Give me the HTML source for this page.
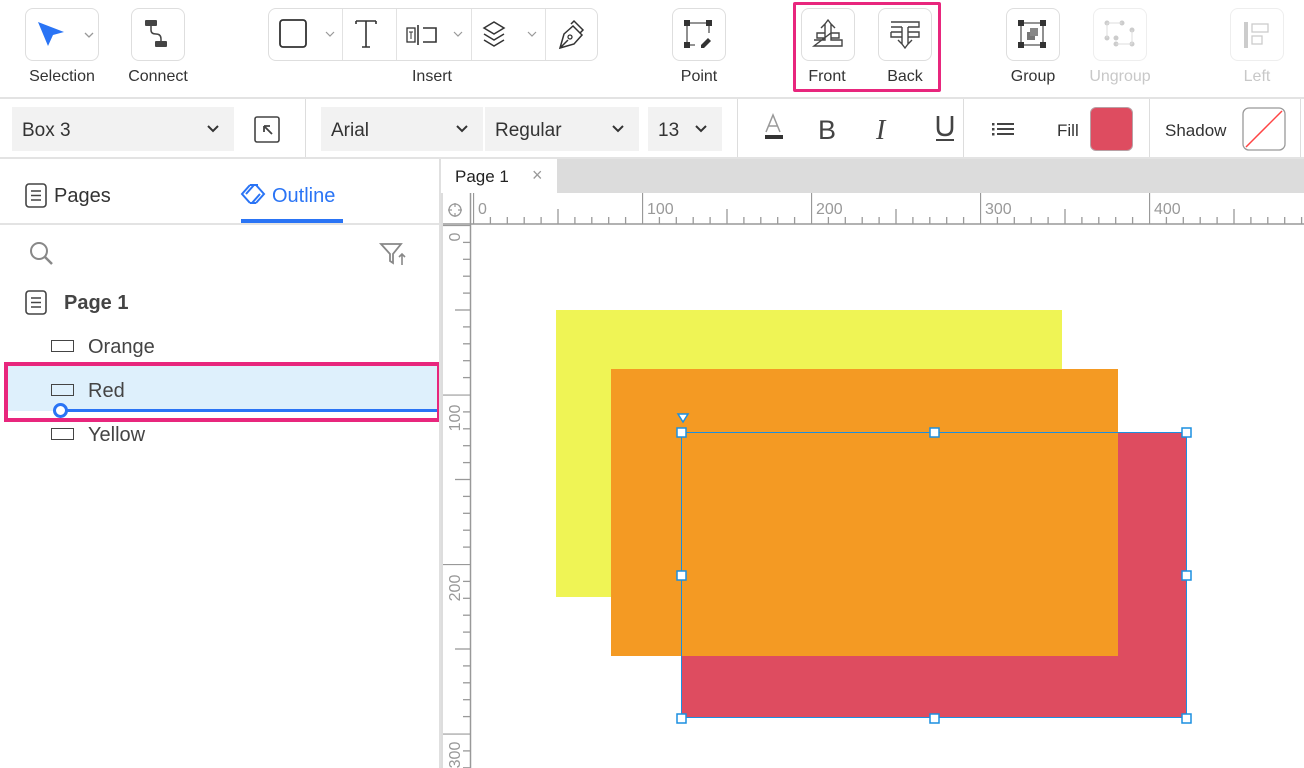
<!DOCTYPE html>
<html><head><meta charset="utf-8">
<style>
*{box-sizing:border-box;margin:0;padding:0}
body{width:1304px;height:768px;overflow:hidden;background:#fff;font-family:"Liberation Sans",sans-serif;color:#333;position:relative}
.a{position:absolute}
.btn{position:absolute;top:8px;height:53px;border:1.5px solid #dedede;border-radius:8px;background:#fff}
.lbl{position:absolute;top:68px;font-size:16px;color:#333;text-align:center;white-space:nowrap}
.dd{position:absolute;top:107px;height:44px;background:#f2f2f2;font-size:19px;color:#333;padding:13px 0 0 10px}
.chev{position:absolute;right:14px;top:15px}
.vd{position:absolute;width:1px;background:#ddd}
</style></head><body>

<!-- top toolbar -->
<div class="btn" style="left:25px;width:74px"></div>
<svg class="a" style="left:36px;top:20px" width="60" height="30"><path d="M2 2 L28 12 L17 15 L12 26 Z" fill="#2a74f5"/><path d="M49 13 l4 4 l4 -4" stroke="#999" stroke-width="1.3" fill="none"/></svg>
<div class="lbl" style="left:20px;width:84px">Selection</div>
<div class="btn" style="left:131px;width:54px"></div>
<svg class="a" style="left:143px;top:18px" width="30" height="30"><rect x="2" y="2" width="12" height="6" rx="1" fill="#444"/><rect x="12" y="23" width="12" height="6" rx="1" fill="#444"/><path d="M8 8 v4 q0 4 5 4 q5 0 5 5 v2" stroke="#444" stroke-width="1.5" fill="none"/></svg>
<div class="lbl" style="left:118px;width:80px">Connect</div>

<div class="btn" style="left:268px;width:330px"></div>
<div class="vd" style="left:342px;top:9px;height:51px;background:#e2e2e2"></div>
<div class="vd" style="left:396px;top:9px;height:51px;background:#e2e2e2"></div>
<div class="vd" style="left:471px;top:9px;height:51px;background:#e2e2e2"></div>
<div class="vd" style="left:545px;top:9px;height:51px;background:#e2e2e2"></div>
<svg class="a" style="left:268px;top:8px" width="330" height="53">
<rect x="12" y="12" width="26" height="27" rx="3" stroke="#333" stroke-width="1.8" fill="none"/>
<path d="M58 24 l4 4 l4 -4" stroke="#999" stroke-width="1.2" fill="none"/>
<path d="M88 13 h20 M98 13 v26 M94 39 h8 M88 13 v3 M108 13 v3" stroke="#333" stroke-width="1.6" fill="none"/>
<rect x="139" y="20" width="8" height="14" stroke="#333" stroke-width="1.3" fill="none"/><path d="M141 24 h4 M143 24 v7" stroke="#333" stroke-width="1"/>
<path d="M150 17 v20 M155 20 h13 v14 h-13" stroke="#333" stroke-width="1.6" fill="none"/>
<path d="M186 24 l4 4 l4 -4" stroke="#999" stroke-width="1.2" fill="none"/>
<path d="M216 20 l10 -6 l10 6 l-10 6 z M216 26 l10 6 l10 -6 M216 32 l10 6 l10 -6" stroke="#333" stroke-width="1.5" fill="none"/>
<path d="M260 24 l4 4 l4 -4" stroke="#999" stroke-width="1.2" fill="none"/>
<path d="M292 40 l4 -14 l9 -8 l9 9 l-8 9 z M292 40 l8 -8 M303 16 l3 -3 l9 9 l-3 3" stroke="#333" stroke-width="1.5" fill="none"/><circle cx="302" cy="29" r="2" stroke="#333" stroke-width="1.3" fill="none"/>
</svg>
<div class="lbl" style="left:392px;width:80px">Insert</div>

<div class="btn" style="left:672px;width:54px"></div>
<svg class="a" style="left:683px;top:19px" width="32" height="32"><path d="M4 4 h22 M4 4 v22 M4 26 h8 M26 4 v10" stroke="#555" stroke-width="1.3"/><rect x="1" y="1" width="6" height="6" fill="#333"/><rect x="23" y="1" width="6" height="6" fill="#333"/><rect x="1" y="23" width="6" height="6" fill="#333"/><path d="M18 26 l7 -7 l3 3 l-7 7 h-3z" fill="#333"/></svg>
<div class="lbl" style="left:662px;width:74px">Point</div>

<div class="btn" style="left:801px;width:54px"></div>
<svg class="a" style="left:811px;top:18px" width="34" height="34"><path d="M3 22 h11 v-2 h-8 v-5 h8 M20 15 h8 v5 h-8 v2 h11 v6 h-28 z M14 20 v-14 l-4 4 M20 20 v-14 l4 4 M14 6 l3 -4 l3 4" stroke="#444" stroke-width="1.4" fill="none"/></svg>
<div class="btn" style="left:878px;width:54px"></div>
<svg class="a" style="left:888px;top:18px" width="34" height="34"><path d="M3 4 h28 v5 h-11 M14 9 h-11 z M3 14 h11 M20 14 h11 v5 h-11 M14 19 h-11 v-5 M14 9 v17 l-4 -4 M20 9 v17 l4 -4 M14 26 l3 4 l3 -4" stroke="#444" stroke-width="1.4" fill="none"/></svg>
<div class="lbl" style="left:794px;width:66px">Front</div>
<div class="lbl" style="left:872px;width:66px">Back</div>
<div class="a" style="left:793px;top:2px;width:148px;height:90px;border:3px solid #e8267d;border-radius:2px"></div>

<div class="btn" style="left:1006px;width:54px"></div>
<svg class="a" style="left:1017px;top:19px" width="32" height="32"><path d="M4 4 h22 v22 h-22 z" stroke="#555" stroke-width="1.3" fill="none"/><rect x="1" y="1" width="6" height="6" fill="#333"/><rect x="23" y="1" width="6" height="6" fill="#333"/><rect x="1" y="23" width="6" height="6" fill="#333"/><rect x="23" y="23" width="6" height="6" fill="#333"/><rect x="10" y="13" width="8" height="8" fill="#777"/><rect x="13" y="9" width="8" height="8" fill="#888"/></svg>
<div class="lbl" style="left:996px;width:74px">Group</div>
<div class="btn" style="left:1093px;width:54px;border-color:#eee"></div>
<svg class="a" style="left:1104px;top:20px" width="32" height="30"><g fill="#ccc"><circle cx="3" cy="3" r="2.5"/><circle cx="18" cy="3" r="2.5"/><circle cx="3" cy="18" r="2.5"/><circle cx="12" cy="18" r="2.5"/><circle cx="28" cy="10" r="2.5"/><circle cx="12" cy="24" r="2.5"/><circle cx="28" cy="24" r="2.5"/></g><path d="M3 3 h15 M3 3 v15 M12 24 h16 M28 10 v14" stroke="#ddd"/></svg>
<div class="lbl" style="left:1080px;width:80px;color:#c8c8c8">Ungroup</div>
<div class="btn" style="left:1230px;width:54px;border-color:#eee"></div>
<svg class="a" style="left:1241px;top:20px" width="32" height="30"><rect x="3" y="2" width="4" height="26" fill="#ccc"/><rect x="11" y="4" width="16" height="8" stroke="#ccc" stroke-width="1.3" fill="none"/><rect x="11" y="16" width="10" height="8" stroke="#ccc" stroke-width="1.3" fill="none"/></svg>
<div class="lbl" style="left:1220px;width:74px;color:#c8c8c8">Left</div>

<div class="a" style="left:0;top:97px;width:1304px;height:2px;background:#e3e3e3"></div>

<!-- second toolbar -->
<div class="dd" style="left:12px;width:222px">Box 3<svg class="chev" width="14" height="14"><path d="M2 4 l5 5 l5 -5" stroke="#333" stroke-width="2" fill="none"/></svg></div>
<svg class="a" style="left:254px;top:116px" width="28" height="28"><rect x="1" y="1" width="24" height="25" rx="2" stroke="#444" stroke-width="1.6" fill="none"/><path d="M10 10 l8 8 M10 10 h6 M10 10 v6" stroke="#444" stroke-width="1.8" fill="none"/></svg>
<div class="vd" style="left:305px;top:99px;height:59px"></div>
<div class="dd" style="left:321px;width:162px">Arial<svg class="chev" width="14" height="14"><path d="M2 4 l5 5 l5 -5" stroke="#333" stroke-width="2" fill="none"/></svg></div>
<div class="dd" style="left:485px;width:154px">Regular<svg class="chev" width="14" height="14"><path d="M2 4 l5 5 l5 -5" stroke="#333" stroke-width="2" fill="none"/></svg></div>
<div class="dd" style="left:648px;width:74px">13<svg class="chev" width="14" height="14"><path d="M2 4 l5 5 l5 -5" stroke="#333" stroke-width="2" fill="none"/></svg></div>
<div class="vd" style="left:737px;top:99px;height:59px"></div>
<svg class="a" style="left:760px;top:112px" width="260" height="32">
<path d="M6 20 l7 -17 l7 17 M9 14 h8" stroke="#999" stroke-width="1.5" fill="none"/><rect x="5" y="23" width="18" height="4" fill="#333"/>
<text x="58" y="27" font-family="Liberation Sans" font-size="27" fill="#444">B</text>
<text x="116" y="27" font-family="Liberation Serif" font-style="italic" font-size="28" fill="#444">I</text>
<path d="M178 4 v12 q0 7 7 7 q7 0 7 -7 v-12" stroke="#444" stroke-width="2.6" fill="none"/><rect x="176" y="27" width="18" height="2" fill="#444"/>
<g fill="#444"><rect x="232" y="11" width="2.5" height="2.5"/><rect x="232" y="16" width="2.5" height="2.5"/><rect x="232" y="21" width="2.5" height="2.5"/><rect x="237" y="11" width="17" height="2"/><rect x="237" y="16" width="17" height="2"/><rect x="237" y="21" width="17" height="2"/></g>
</svg>
<div class="vd" style="left:963px;top:99px;height:59px"></div>
<div class="a" style="left:1057px;top:121px;font-size:17px">Fill</div>
<div class="a" style="left:1090px;top:107px;width:43px;height:44px;background:#de4c60;border:1px solid #b9a0a5;border-radius:6px"></div>
<div class="vd" style="left:1149px;top:99px;height:59px"></div>
<div class="a" style="left:1165px;top:121px;font-size:17px">Shadow</div>
<svg class="a" style="left:1242px;top:107px" width="44" height="44"><rect x="1" y="1" width="42" height="42" rx="6" stroke="#999" stroke-width="1.3" fill="#fff"/><path d="M4 40 L40 4" stroke="#f44" stroke-width="1.5"/></svg>
<div class="vd" style="left:1300px;top:99px;height:59px"></div>
<div class="a" style="left:0;top:157px;width:1304px;height:2px;background:#e3e3e3"></div>

<!-- left panel -->
<svg class="a" style="left:25px;top:183px" width="24" height="26"><rect x="1" y="1" width="20" height="23" rx="3" stroke="#444" stroke-width="1.6" fill="none"/><path d="M6 8 h10 M6 12.5 h10 M6 17 h10" stroke="#444" stroke-width="1.5"/></svg>
<div class="a" style="left:54px;top:185px;font-size:20px;color:#333">Pages</div>
<svg class="a" style="left:240px;top:183px" width="28" height="24"><path d="M10 2 l-8 9 l8 9 M16 2 l8 9 l-8 9 M10 2 l8 0 M10 20 h6 M6 11 l8 -9 M12 20 l8 -9" stroke="#2a74f5" stroke-width="2" fill="none"/></svg>
<div class="a" style="left:272px;top:185px;font-size:20px;color:#2a74f5">Outline</div>
<div class="a" style="left:241px;top:219px;width:102px;height:5px;background:#2a74f5"></div>
<div class="a" style="left:0;top:223px;width:440px;height:2px;background:#e3e3e3"></div>
<svg class="a" style="left:28px;top:240px" width="28" height="28"><circle cx="11" cy="11" r="8" stroke="#888" stroke-width="2" fill="none"/><path d="M17 17 l7 7" stroke="#888" stroke-width="2.5"/></svg>
<svg class="a" style="left:378px;top:240px" width="30" height="28"><path d="M3 4 h20 l-8 10 v9 l-3 -2 v-7 z" stroke="#888" stroke-width="1.8" fill="none"/><path d="M24 14 v11 M21 17 l3 -3 l3 3" stroke="#888" stroke-width="1.6" fill="none"/></svg>
<svg class="a" style="left:25px;top:290px" width="24" height="26"><rect x="1" y="1" width="20" height="23" rx="3" stroke="#444" stroke-width="1.6" fill="none"/><path d="M6 8 h10 M6 12.5 h10 M6 17 h10" stroke="#444" stroke-width="1.5"/></svg>
<div class="a" style="left:64px;top:292px;font-size:20px;font-weight:bold;color:#444">Page 1</div>
<div class="a" style="left:51px;top:340px;width:23px;height:12px;border:1.5px solid #444"></div>
<div class="a" style="left:88px;top:336px;font-size:20px;color:#444">Orange</div>
<div class="a" style="left:8px;top:366px;width:429px;height:45px;background:#def0fc"></div>
<div class="a" style="left:51px;top:384px;width:23px;height:12px;border:1.5px solid #444"></div>
<div class="a" style="left:88px;top:380px;font-size:20px;color:#444">Red</div>
<div class="a" style="left:61px;top:409px;width:377px;height:3px;background:#2a74f5"></div>
<div class="a" style="left:53px;top:403px;width:15px;height:15px;border:3px solid #2a74f5;border-radius:50%;background:#fff"></div>
<div class="a" style="left:51px;top:428px;width:23px;height:12px;border:1.5px solid #444"></div>
<div class="a" style="left:88px;top:424px;font-size:20px;color:#444">Yellow</div>
<div class="a" style="left:4px;top:362px;width:437px;height:60px;border:4px solid #e8267d"></div>
<div class="a" style="left:439px;top:159px;width:2px;height:609px;background:#e0e0e0"></div>

<!-- tab bar -->
<div class="a" style="left:441px;top:159px;width:863px;height:34px;background:#dcdcdc"></div>
<div class="a" style="left:441px;top:159px;width:116px;height:34px;background:#fff"></div>
<div class="a" style="left:455px;top:167px;font-size:17px;color:#222">Page 1</div>
<div class="a" style="left:532px;top:165px;font-size:18px;color:#999">×</div>

<!-- rulers -->
<svg class="a" style="left:441px;top:193px" width="863" height="575">
<defs>
<pattern id="ph" x="32" y="0" width="169" height="32" patternUnits="userSpaceOnUse">
<g stroke="#999" stroke-width="1.3"><line x1="0.5" y1="0" x2="0.5" y2="31"/>
<line x1="17.4" y1="24" x2="17.4" y2="31"/><line x1="34.3" y1="24" x2="34.3" y2="31"/><line x1="51.2" y1="24" x2="51.2" y2="31"/><line x1="68.1" y1="24" x2="68.1" y2="31"/><line x1="85" y1="16" x2="85" y2="31"/><line x1="101.9" y1="24" x2="101.9" y2="31"/><line x1="118.8" y1="24" x2="118.8" y2="31"/><line x1="135.7" y1="24" x2="135.7" y2="31"/><line x1="152.6" y1="24" x2="152.6" y2="31"/></g>
</pattern>
<pattern id="pv" x="0" y="32" width="30" height="169.5" patternUnits="userSpaceOnUse">
<g stroke="#999" stroke-width="1.3"><line x1="0" y1="0.5" x2="29" y2="0.5"/>
<line x1="22" y1="17.4" x2="29" y2="17.4"/><line x1="22" y1="34.3" x2="29" y2="34.3"/><line x1="22" y1="51.2" x2="29" y2="51.2"/><line x1="22" y1="68.1" x2="29" y2="68.1"/><line x1="14" y1="85" x2="29" y2="85"/><line x1="22" y1="101.9" x2="29" y2="101.9"/><line x1="22" y1="118.8" x2="29" y2="118.8"/><line x1="22" y1="135.7" x2="29" y2="135.7"/><line x1="22" y1="152.6" x2="29" y2="152.6"/></g>
</pattern>
</defs>
<rect x="30" y="0" width="833" height="32" fill="url(#ph)"/>
<rect x="0" y="32" width="30" height="543" fill="url(#pv)"/>
<line x1="0" y1="31" x2="863" y2="31" stroke="#999" stroke-width="1.5"/>
<line x1="29.5" y1="0" x2="29.5" y2="575" stroke="#999" stroke-width="1.5"/>
<line x1="1" y1="0" x2="1" y2="575" stroke="#ddd" stroke-width="2"/>
<circle cx="14" cy="17" r="6" stroke="#999" stroke-width="1.3" fill="none"/><path d="M14 10 v4 M14 20 v4 M7 17 h4 M17 17 h4" stroke="#999" stroke-width="1.2"/>
<g font-family="Liberation Sans" font-size="16" fill="#999">
<text x="37" y="21">0</text><text x="206" y="21">100</text><text x="375" y="21">200</text><text x="544" y="21">300</text><text x="713" y="21">400</text>
<text transform="translate(19,44) rotate(-90)" text-anchor="middle">0</text>
<text transform="translate(19,225) rotate(-90)" text-anchor="middle">100</text>
<text transform="translate(19,395) rotate(-90)" text-anchor="middle">200</text>
<text transform="translate(19,562) rotate(-90)" text-anchor="middle">300</text>
</g>
</svg>

<!-- canvas shapes -->
<div class="a" style="left:556px;top:310px;width:506px;height:287px;background:#eff455"></div>
<div class="a" style="left:611px;top:369px;width:507px;height:287px;background:#f49a23"></div>
<div class="a" style="left:1118px;top:432px;width:69px;height:286px;background:#de4c60"></div>
<div class="a" style="left:681px;top:656px;width:437px;height:62px;background:#de4c60"></div>
<div class="a" style="left:681px;top:432px;width:506px;height:286px;border:1.5px solid #1b8fe0"></div>
<svg class="a" style="left:670px;top:410px" width="530" height="320">
<path d="M8 4 h10 l-5 8 z" fill="#fff" stroke="#1b8fe0" stroke-width="1.5"/>
<g fill="#fff" stroke="#1b8fe0" stroke-width="1.5">
<rect x="7" y="18" width="9" height="9"/><rect x="260" y="18" width="9" height="9"/><rect x="512" y="18" width="9" height="9"/>
<rect x="7" y="161" width="9" height="9"/><rect x="512" y="161" width="9" height="9"/>
<rect x="7" y="304" width="9" height="9"/><rect x="260" y="304" width="9" height="9"/><rect x="512" y="304" width="9" height="9"/>
</g></svg>
</body></html>
